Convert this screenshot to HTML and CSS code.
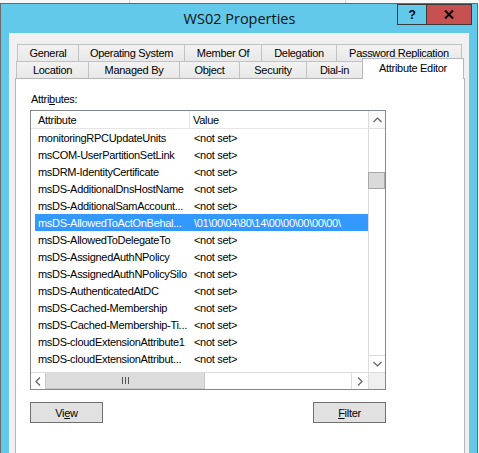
FILE: index.html
```html
<!DOCTYPE html>
<html>
<head>
<meta charset="utf-8">
<link rel="stylesheet" href="styles.css">
</head>
<body>
<div class="desk"><div class="seg s1"></div><div class="seg s2"></div><div class="seg s3"></div></div>
<div class="window">
  <div class="titlebar">
    <div></div>
    <div class="title">WS02 Properties</div>
    <div class="caption-btns">
      <div class="cbtn help">?</div>
      <div class="cbtn close">
        <svg width="10" height="9" viewBox="0 0 10 9"><path d="M1 0.5 L9 8.5 M9 0.5 L1 8.5" stroke="#000" stroke-width="2"/></svg>
      </div>
    </div>
  </div>
  <div class="panel">
    <div class="tabrow row1">
      <div class="tab t-general">General</div>
      <div class="tab t-os">Operating System</div>
      <div class="tab t-member">Member Of</div>
      <div class="tab t-deleg">Delegation</div>
      <div class="tab t-pwd">Password Replication</div>
    </div>
    <div class="tabrow row2">
      <div class="tab t-loc">Location</div>
      <div class="tab t-managed">Managed By</div>
      <div class="tab t-object">Object</div>
      <div class="tab t-sec">Security</div>
      <div class="tab t-dial">Dial-in</div>
      <div class="tab t-attr selected">Attribute Editor</div>
    </div>
    <div class="page">
      <div class="label">Attri<u>b</u>utes:</div>
      <div class="listbox">
        <div class="lv">
          <div class="lv-head"><div class="c1">Attribute</div><div class="c2">Value</div></div>
          <div class="lv-row"><div class="c1">monitoringRPCUpdateUnits</div><div class="c2">&lt;not set&gt;</div></div>
          <div class="lv-row"><div class="c1">msCOM-UserPartitionSetLink</div><div class="c2">&lt;not set&gt;</div></div>
          <div class="lv-row"><div class="c1">msDRM-IdentityCertificate</div><div class="c2">&lt;not set&gt;</div></div>
          <div class="lv-row"><div class="c1">msDS-AdditionalDnsHostName</div><div class="c2">&lt;not set&gt;</div></div>
          <div class="lv-row"><div class="c1">msDS-AdditionalSamAccount...</div><div class="c2">&lt;not set&gt;</div></div>
          <div class="lv-row sel"><div class="c1">msDS-AllowedToActOnBehal...</div><div class="c2">\01\00\04\80\14\00\00\00\00\00\</div></div>
          <div class="lv-row"><div class="c1">msDS-AllowedToDelegateTo</div><div class="c2">&lt;not set&gt;</div></div>
          <div class="lv-row"><div class="c1">msDS-AssignedAuthNPolicy</div><div class="c2">&lt;not set&gt;</div></div>
          <div class="lv-row"><div class="c1">msDS-AssignedAuthNPolicySilo</div><div class="c2">&lt;not set&gt;</div></div>
          <div class="lv-row"><div class="c1">msDS-AuthenticatedAtDC</div><div class="c2">&lt;not set&gt;</div></div>
          <div class="lv-row"><div class="c1">msDS-Cached-Membership</div><div class="c2">&lt;not set&gt;</div></div>
          <div class="lv-row"><div class="c1">msDS-Cached-Membership-Ti...</div><div class="c2">&lt;not set&gt;</div></div>
          <div class="lv-row"><div class="c1">msDS-cloudExtensionAttribute1</div><div class="c2">&lt;not set&gt;</div></div>
          <div class="lv-row"><div class="c1">msDS-cloudExtensionAttribut...</div><div class="c2">&lt;not set&gt;</div></div>
        </div>
        <div class="vscroll">
          <div class="vbtn up"><svg width="9" height="6" viewBox="0 0 9 6"><path d="M0.5 5 L4.5 1 L8.5 5" fill="none" stroke="#606060" stroke-width="1.2"/></svg></div>
          <div class="vtrack"><div class="vthumb"></div></div>
          <div class="vbtn down"><svg width="9" height="6" viewBox="0 0 9 6"><path d="M0.5 1 L4.5 5 L8.5 1" fill="none" stroke="#606060" stroke-width="1.2"/></svg></div>
        </div>
        <div class="hscroll">
          <div class="hbtn left"><svg width="6" height="9" viewBox="0 0 6 9"><path d="M5 0.5 L1 4.5 L5 8.5" fill="none" stroke="#606060" stroke-width="1.2"/></svg></div>
          <div class="hthumb"><div class="grip"><span></span><span></span><span></span></div></div>
          <div class="htrack"></div>
          <div class="hbtn right"><svg width="6" height="9" viewBox="0 0 6 9"><path d="M1 0.5 L5 4.5 L1 8.5" fill="none" stroke="#606060" stroke-width="1.2"/></svg></div>
        </div>
        <div class="corner"></div>
      </div>
      <div class="actions">
        <div class="btn">Vi<u>e</u>w</div>
        <div class="btn"><u>F</u>ilter</div>
      </div>
    </div>
  </div>
</div>
</body>
</html>
```
FILE: styles.css
```css
html, body {
  margin: 0;
  padding: 0;
  background: #f4f4f4;
  overflow: hidden;
  width: 479px;
  height: 453px;
}

.desk {
  display: flex;
  height: 3px;
  background: #f7f7f7;
}
.seg { height: 3px; }
.s1 { width: 129px; border-right: 1px solid #d0d0d0; }
.s2 { width: 215px; border-right: 1px solid #d0d0d0; }
.s3 { flex: 1; }

.window {
  box-sizing: border-box;
  width: 478px;
  height: 450px;
  background: #63c9ea;
  border: 1px solid #6a6a6a;
  border-bottom: none;
  font-family: "Liberation Sans", Arial, sans-serif;
  font-size: 11px;
  letter-spacing: -0.3px;
  color: #000;
  overflow: hidden;
}

.titlebar {
  display: grid;
  grid-template-columns: 1fr auto 1fr;
  height: 29px;
}
.title {
  font-family: "Open Sans", "Noto Sans", sans-serif;
  font-size: 14.5px;
  letter-spacing: 0;
  color: #111;
  line-height: 29px;
  padding-left: 1px;
}
.caption-btns {
  justify-self: end;
  align-self: start;
  display: flex;
  margin-right: 5px;
}
.cbtn {
  box-sizing: border-box;
  height: 21px;
  border: 1px solid #3b3b3b;
  display: flex;
  align-items: center;
  justify-content: center;
  font-family: "Liberation Sans", Arial, sans-serif;
  font-weight: bold;
  font-size: 12px;
}
.help {
  width: 30px;
  background: #63c9ea;
}
.close {
  width: 46px;
  margin-left: -1px;
  background: #c75050;
}

.panel {
  margin-left: 8px;
  width: 460px;
  height: 430px;
  background: #f0f0f0;
  box-sizing: border-box;
  padding: 11px 0 0 6px;
}

.tabrow {
  display: flex;
  height: 17px;
}
.row1 { margin-left: 2px; }
.row2 { margin-left: 1px; align-items: flex-end; }
.tab {
  box-sizing: border-box;
  height: 17px;
  border: 1px solid #c2c2c2;
  border-bottom: none;
  background: linear-gradient(#f2f2f2, #e8e8e8);
  display: flex;
  align-items: center;
  justify-content: center;
  margin-right: -1px;
  white-space: nowrap;
}
.t-general { width: 62px; }
.t-os { width: 107px; }
.t-member { width: 78px; }
.t-deleg { width: 76px; }
.t-pwd { width: 126px; }
.t-loc { width: 73px; }
.t-managed { width: 92px; }
.t-object { width: 61px; }
.t-sec { width: 68px; }
.t-dial { width: 57px; }
.t-attr { width: 102px; }
.tab.selected {
  position: relative;
  z-index: 1;
  height: 21px;
  margin-bottom: -1px;
  background: #fff;
  border-color: #b8b8b8;
  align-items: flex-start;
  padding-top: 3px;
}

.page {
  box-sizing: border-box;
  width: 450px;
  height: 400px;
  background: #fff;
  border: 1px solid #b4b4b4;
  padding: 13px 0 0 14px;
}
.label {
  height: 14px;
  line-height: 14px;
  margin-left: 1px;
  margin-bottom: 4px;
}
.label u, .btn u { text-underline-offset: 1px; }

.listbox {
  box-sizing: border-box;
  width: 356px;
  height: 280px;
  border: 1px solid #828790;
  display: grid;
  grid-template-columns: 337px 17px;
  grid-template-rows: 261px 17px;
  background: #fff;
}
.lv {
  overflow: hidden;
}
.lv-head {
  display: flex;
  height: 18px;
  box-sizing: border-box;
  border-bottom: 1px solid #e5e5e5;
  line-height: 18px;
}
.lv-head .c1 {
  width: 159px;
  box-sizing: border-box;
  padding-left: 7px;
  border-right: 1px solid #e5e5e5;
}
.lv-head .c2 { padding-left: 3px; }
.lv-row {
  display: flex;
  height: 17px;
  line-height: 18px;
  margin-left: 4px;
  white-space: nowrap;
}
.lv-row .c1 {
  width: 155px;
  flex: none;
  box-sizing: border-box;
  padding-left: 3px;
  overflow: hidden;
}
.lv-row .c2 {
  flex: 1;
  padding-left: 4px;
  overflow: hidden;
}
.lv-row.sel {
  background: #3399ff;
  color: #fff;
}

.vscroll {
  display: flex;
  flex-direction: column;
  border-left: 1px solid #dcdcdc;
}
.vbtn {
  height: 17px;
  display: flex;
  align-items: center;
  justify-content: center;
  flex: none;
}
.vbtn.up {
  height: 18px;
  box-sizing: border-box;
  border-bottom: 1px solid #e0e0e0;
  background: #fafafa;
}
.vbtn.down {
  box-sizing: border-box;
  border-top: 1px solid #dcdcdc;
}
.vtrack {
  flex: 1;
}
.vthumb {
  margin-top: 43px;
  margin-left: -1px;
  height: 17px;
  box-sizing: border-box;
  background: #dadada;
  border: 1px solid #a8a8a8;
}

.hscroll {
  display: flex;
  border-top: 1px solid #dcdcdc;
}
.hbtn {
  display: flex;
  align-items: center;
  justify-content: center;
  flex: none;
}
.hbtn.left { width: 14px; }
.hbtn.right {
  width: 16px;
  border-left: 1px solid #dcdcdc;
}
.hthumb {
  width: 160px;
  box-sizing: border-box;
  background: #dcdcdc;
  border: 1px solid #c8c8c8;
  border-top: none;
  display: flex;
  align-items: center;
  justify-content: center;
}
.grip {
  display: flex;
  gap: 2px;
}
.grip span {
  width: 1px;
  height: 7px;
  background: #555;
}
.htrack { flex: 1; }
.corner {
  background: #f0f0f0;
  border-top: 1px solid #dcdcdc;
  border-left: 1px solid #dcdcdc;
}

.actions {
  width: 356px;
  display: flex;
  justify-content: space-between;
  margin-top: 12px;
}
.btn {
  box-sizing: border-box;
  width: 73px;
  height: 21px;
  border: 1px solid #707070;
  background: #e1e1e1;
  display: flex;
  align-items: center;
  justify-content: center;
}
```
